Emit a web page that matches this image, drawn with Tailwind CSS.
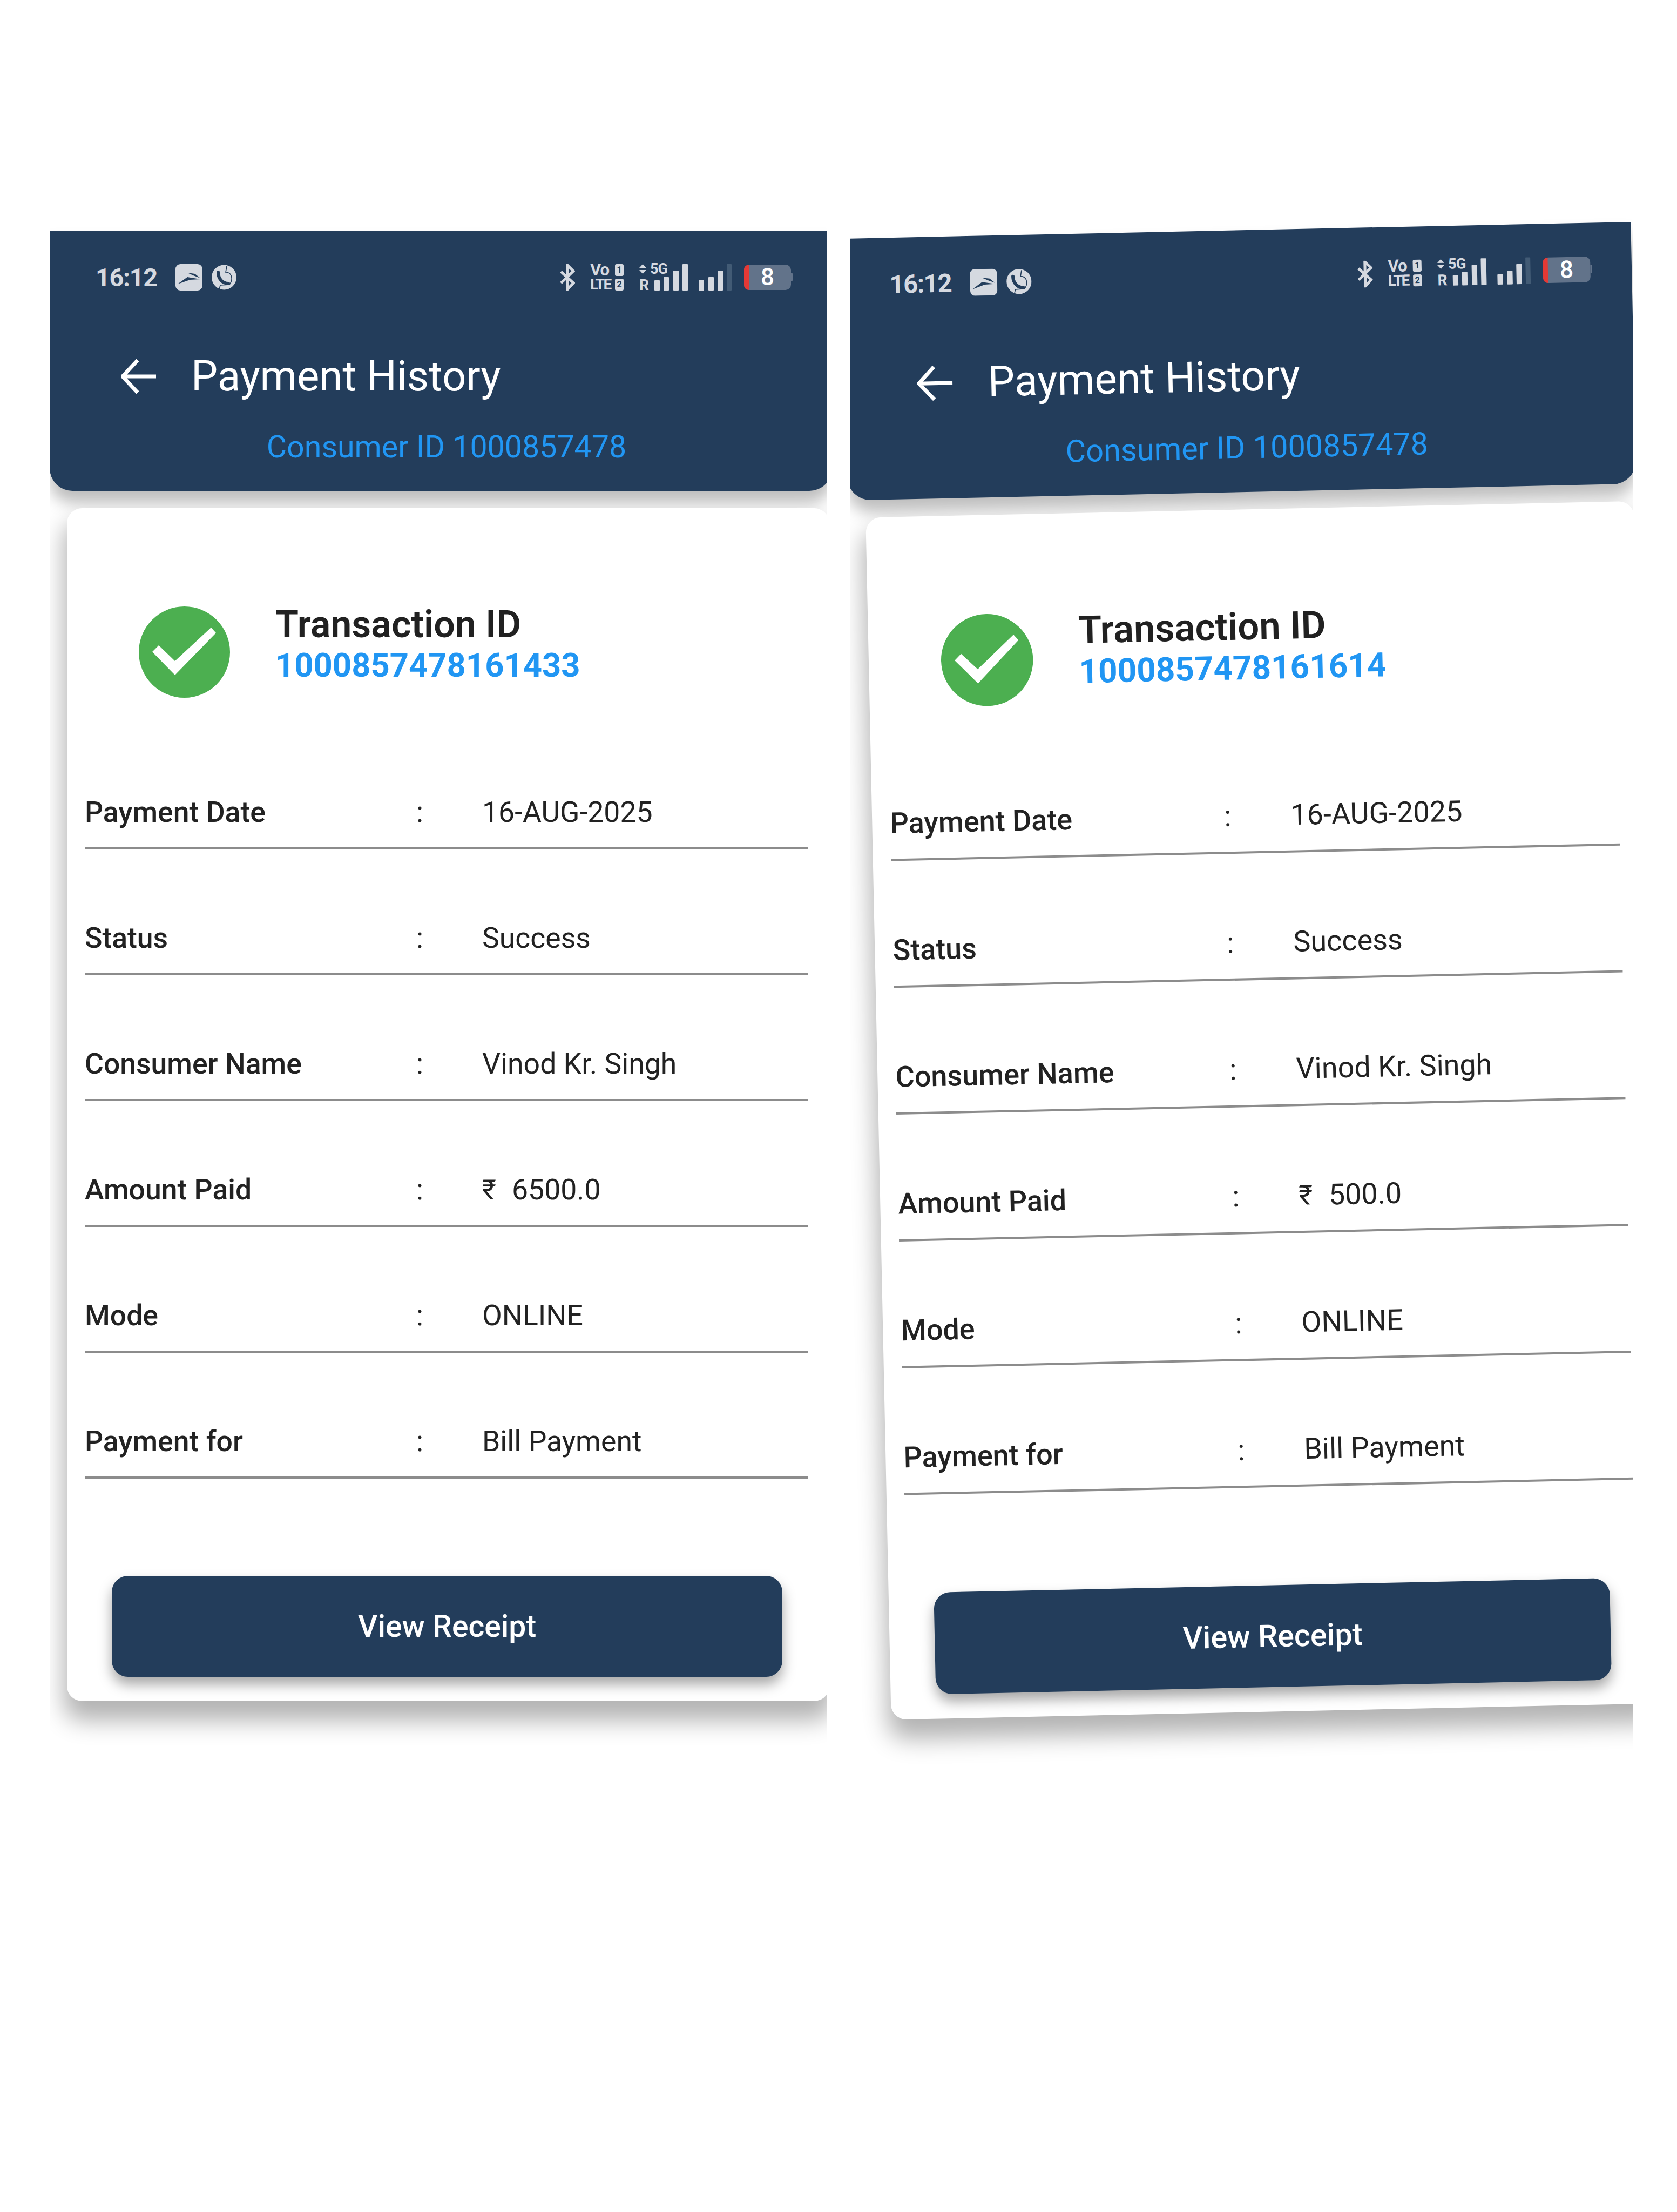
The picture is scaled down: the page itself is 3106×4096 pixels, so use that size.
<!DOCTYPE html>
<html>
<head>
<meta charset="utf-8">
<title>Payment History</title>
<script src="https://cdn.jsdelivr.net/npm/@tailwindcss/browser@4"></script>
</head>
<body class="bg-white [font-family:Roboto,'Noto_Sans',sans-serif]">
<div class="flex w-[3106px] h-[4096px] pt-[380px] pl-[92px]">

  <!-- left screenshot -->
  <div class="w-[1439px] h-[2900px] overflow-hidden shrink-0 pt-[48px]">
    <div class="w-[1449px]">
      <!-- header -->
      <div class="h-[481px] pt-[60px] bg-[#233d5b] rounded-b-[42px] shadow-[0_22px_28px_rgba(0,0,0,0.26)]">
        <div class="flex h-[50px] items-center pl-[85px] pr-[73px]">
          <span class="w-[115px] text-[47px] leading-none font-bold text-[#d5d9e0] tracking-[-1.5px]">16:12</span>
          <svg class="ml-[33px]" width="50" height="49" viewBox="0 0 50 49"><rect width="50" height="49" rx="9" fill="#d5d9e0"/><path d="M4 37 L22 24 L46 28 L27 29 Z M22 16 L36 18 L46 26 L33 21 Z" fill="#233d5b"/></svg>
          <svg class="ml-[17px]" width="46" height="47" viewBox="0 0 46 47"><circle cx="23" cy="23.5" r="23" fill="#d5d9e0"/><path d="M12 14 C12 26 20 35 31 35" fill="none" stroke="#233d5b" stroke-width="6" stroke-linecap="round"/><path d="M28 3 L26 14 C38 14 40 28 33 37 L16 38 L14 46" fill="none" stroke="#233d5b" stroke-width="1.6"/></svg>
          <svg class="ml-auto" width="28" height="49" viewBox="0 0 28 49"><path d="M2 14 L25 35 L14 47 L14 2 L25 13 L2 35" fill="none" stroke="#d5d9e0" stroke-width="5"/></svg>
          <div class="ml-[28px] w-[62px] h-[49px] flex flex-col justify-between font-bold text-[#d5d9e0] leading-[22px]">
            <div class="flex justify-between items-center"><span class="text-[31px] tracking-[-1px]">Vo</span><span class="w-[16px] h-[22px] rounded-[3px] bg-[#d5d9e0] text-[#233d5b] text-[16px] text-center">1</span></div>
            <div class="flex justify-between items-center"><span class="text-[28px] tracking-[-2.5px]">LTE</span><span class="w-[16px] h-[22px] rounded-[3px] bg-[#d5d9e0] text-[#233d5b] text-[16px] text-center">2</span></div>
          </div>
          <div class="ml-[29px] flex items-end h-[49px] text-[#d5d9e0]">
            <div class="w-[20px] h-[49px] flex flex-col justify-between">
              <svg width="13" height="18" viewBox="0 0 13 18"><path d="M6.5 0 L13 7 H0 Z M0 11 H13 L6.5 18 Z" fill="#d5d9e0"/></svg>
              <span class="text-[28px] font-bold leading-[20px]">R</span>
            </div>
            <div class="w-[35px] h-[49px] flex flex-col justify-between">
              <span class="text-[27px] font-bold leading-[19px] tracking-[-1px]">5G</span>
              <div class="flex items-end gap-[7px] pl-[8px]"><span class="w-[10px] h-[19px] bg-[#d5d9e0] rounded-[1px]"></span><span class="w-[10px] h-[25px] bg-[#d5d9e0] rounded-[1px]"></span></div>
            </div>
            <span class="ml-[8px] w-[10px] h-[37px] bg-[#d5d9e0] rounded-[1px]"></span>
            <span class="ml-[7px] w-[10px] h-[49px] bg-[#d5d9e0] rounded-[1px]"></span>
            <span class="ml-[20px] w-[10px] h-[19px] bg-[#d5d9e0] rounded-[1px]"></span>
            <span class="ml-[8px] w-[10px] h-[25px] bg-[#d5d9e0] rounded-[1px]"></span>
            <span class="ml-[7px] w-[10px] h-[37px] bg-[#d5d9e0] rounded-[1px]"></span>
            <span class="ml-[7px] w-[9px] h-[49px] bg-[#425b75] rounded-[1px]"></span>
          </div>
          <div class="ml-[23px] flex items-center">
            <div class="w-[87px] h-[47px] rounded-[10px] bg-[#62738a] flex">
              <span class="w-[9px] bg-[#e53935] rounded-l-[10px]"></span>
              <span class="flex-1 text-center text-white text-[44px] font-medium leading-[47px] pr-[9px]">8</span>
            </div>
            <span class="w-[3px] h-[16px] bg-[#62738a] rounded-r-[2px]"></span>
          </div>
        </div>
        <div class="flex items-center h-[90px] mt-[114px] pl-[132px]">
          <svg width="65" height="64" viewBox="0 0 65 64"><path d="M65 32 H4 M31 2 L3 32 L31 62" fill="none" stroke="white" stroke-width="7"/></svg>
          <span class="ml-[65px] text-[78px] text-white leading-none">Payment History</span>
        </div>
        <p class="mt-[56px] pl-[21px] text-center text-[57.3px] leading-[60px] text-[#2196f3]">Consumer ID 1000857478</p>
      </div>

      <!-- card -->
      <div class="ml-[32px] mt-[32px] w-[1412px] h-[2209px] bg-white rounded-[28px] pt-[182px] shadow-[0_30px_44px_6px_rgba(0,0,0,0.3)]">
        <div class="flex items-start pl-[133px]">
          <svg width="169" height="169" viewBox="0 0 169 169"><circle cx="84.5" cy="84.5" r="84.5" fill="#4caf50"/><path d="M25 84 L67 127 L143 49 L134 39 L67 101 L37 72 Z" fill="white"/></svg>
          <div class="ml-[84px] -mt-[5px]">
            <p class="text-[70px] leading-[76px] font-semibold text-[#212121]">Transaction ID</p>
            <p class="mt-[8px] text-[61.5px] leading-[60px] font-bold text-[#2196f3]">1000857478161433</p>
          </div>
        </div>
        <div class="mt-[48px] ml-[33px] w-[1340px] text-[#222]">
          <div class="flex items-end h-[233px] pb-[35px] border-b-4 border-[#8c8c8c] text-[53.5px] leading-[60px]"><span class="w-[614px] font-medium">Payment Date</span><span class="w-[122px]">:</span><span>16-AUG-2025</span></div>
          <div class="flex items-end h-[233px] pb-[35px] border-b-4 border-[#8c8c8c] text-[53.5px] leading-[60px]"><span class="w-[614px] font-medium">Status</span><span class="w-[122px]">:</span><span>Success</span></div>
          <div class="flex items-end h-[233px] pb-[35px] border-b-4 border-[#8c8c8c] text-[53.5px] leading-[60px]"><span class="w-[614px] font-medium">Consumer Name</span><span class="w-[122px]">:</span><span>Vinod Kr. Singh</span></div>
          <div class="flex items-end h-[233px] pb-[35px] border-b-4 border-[#8c8c8c] text-[53.5px] leading-[60px]"><span class="w-[614px] font-medium">Amount Paid</span><span class="w-[122px]">:</span><span class="w-[55px] text-[50px]">₹</span><span>6500.0</span></div>
          <div class="flex items-end h-[233px] pb-[35px] border-b-4 border-[#8c8c8c] text-[53.5px] leading-[60px]"><span class="w-[614px] font-medium">Mode</span><span class="w-[122px]">:</span><span>ONLINE</span></div>
          <div class="flex items-end h-[233px] pb-[35px] border-b-4 border-[#8c8c8c] text-[53.5px] leading-[60px]"><span class="w-[614px] font-medium">Payment for</span><span class="w-[122px]">:</span><span>Bill Payment</span></div>
        </div>
        <div class="ml-[83px] mt-[180px] w-[1242px] h-[187px] rounded-[30px] bg-[#233d5b] flex items-center justify-center text-white text-[57px] font-medium shadow-[0_14px_24px_rgba(0,0,0,0.35)]">View Receipt</div>
      </div>
    </div>
  </div>

  <!-- right screenshot, same screen photographed slightly turned -->
  <div class="ml-[44px] w-[1450px] h-[2980px] overflow-hidden shrink-0">
    <div class="w-[1449px] -ml-[15px] mt-[62px] origin-top-left rotate-[-1.22deg] scale-[1.008]">
      <!-- header -->
      <div class="h-[481px] pt-[60px] bg-[#233d5b] rounded-b-[42px] shadow-[0_22px_28px_rgba(0,0,0,0.26)]">
        <div class="flex h-[50px] items-center pl-[85px] pr-[73px]">
          <span class="w-[115px] text-[47px] leading-none font-bold text-[#d5d9e0] tracking-[-1.5px]">16:12</span>
          <svg class="ml-[33px]" width="50" height="49" viewBox="0 0 50 49"><rect width="50" height="49" rx="9" fill="#d5d9e0"/><path d="M4 37 L22 24 L46 28 L27 29 Z M22 16 L36 18 L46 26 L33 21 Z" fill="#233d5b"/></svg>
          <svg class="ml-[17px]" width="46" height="47" viewBox="0 0 46 47"><circle cx="23" cy="23.5" r="23" fill="#d5d9e0"/><path d="M12 14 C12 26 20 35 31 35" fill="none" stroke="#233d5b" stroke-width="6" stroke-linecap="round"/><path d="M28 3 L26 14 C38 14 40 28 33 37 L16 38 L14 46" fill="none" stroke="#233d5b" stroke-width="1.6"/></svg>
          <svg class="ml-auto" width="28" height="49" viewBox="0 0 28 49"><path d="M2 14 L25 35 L14 47 L14 2 L25 13 L2 35" fill="none" stroke="#d5d9e0" stroke-width="5"/></svg>
          <div class="ml-[28px] w-[62px] h-[49px] flex flex-col justify-between font-bold text-[#d5d9e0] leading-[22px]">
            <div class="flex justify-between items-center"><span class="text-[31px] tracking-[-1px]">Vo</span><span class="w-[16px] h-[22px] rounded-[3px] bg-[#d5d9e0] text-[#233d5b] text-[16px] text-center">1</span></div>
            <div class="flex justify-between items-center"><span class="text-[28px] tracking-[-2.5px]">LTE</span><span class="w-[16px] h-[22px] rounded-[3px] bg-[#d5d9e0] text-[#233d5b] text-[16px] text-center">2</span></div>
          </div>
          <div class="ml-[29px] flex items-end h-[49px] text-[#d5d9e0]">
            <div class="w-[20px] h-[49px] flex flex-col justify-between">
              <svg width="13" height="18" viewBox="0 0 13 18"><path d="M6.5 0 L13 7 H0 Z M0 11 H13 L6.5 18 Z" fill="#d5d9e0"/></svg>
              <span class="text-[28px] font-bold leading-[20px]">R</span>
            </div>
            <div class="w-[35px] h-[49px] flex flex-col justify-between">
              <span class="text-[27px] font-bold leading-[19px] tracking-[-1px]">5G</span>
              <div class="flex items-end gap-[7px] pl-[8px]"><span class="w-[10px] h-[19px] bg-[#d5d9e0] rounded-[1px]"></span><span class="w-[10px] h-[25px] bg-[#d5d9e0] rounded-[1px]"></span></div>
            </div>
            <span class="ml-[8px] w-[10px] h-[37px] bg-[#d5d9e0] rounded-[1px]"></span>
            <span class="ml-[7px] w-[10px] h-[49px] bg-[#d5d9e0] rounded-[1px]"></span>
            <span class="ml-[20px] w-[10px] h-[19px] bg-[#d5d9e0] rounded-[1px]"></span>
            <span class="ml-[8px] w-[10px] h-[25px] bg-[#d5d9e0] rounded-[1px]"></span>
            <span class="ml-[7px] w-[10px] h-[37px] bg-[#d5d9e0] rounded-[1px]"></span>
            <span class="ml-[7px] w-[9px] h-[49px] bg-[#425b75] rounded-[1px]"></span>
          </div>
          <div class="ml-[23px] flex items-center">
            <div class="w-[87px] h-[47px] rounded-[10px] bg-[#62738a] flex">
              <span class="w-[9px] bg-[#e53935] rounded-l-[10px]"></span>
              <span class="flex-1 text-center text-white text-[44px] font-medium leading-[47px] pr-[9px]">8</span>
            </div>
            <span class="w-[3px] h-[16px] bg-[#62738a] rounded-r-[2px]"></span>
          </div>
        </div>
        <div class="flex items-center h-[90px] mt-[114px] pl-[132px]">
          <svg width="65" height="64" viewBox="0 0 65 64"><path d="M65 32 H4 M31 2 L3 32 L31 62" fill="none" stroke="white" stroke-width="7"/></svg>
          <span class="ml-[65px] text-[78px] text-white leading-none">Payment History</span>
        </div>
        <p class="mt-[56px] pl-[21px] text-center text-[57.3px] leading-[60px] text-[#2196f3]">Consumer ID 1000857478</p>
      </div>

      <!-- card -->
      <div class="ml-[32px] mt-[32px] w-[1412px] h-[2209px] bg-white rounded-[28px] pt-[182px] shadow-[0_30px_44px_6px_rgba(0,0,0,0.3)]">
        <div class="flex items-start pl-[133px]">
          <svg width="169" height="169" viewBox="0 0 169 169"><circle cx="84.5" cy="84.5" r="84.5" fill="#4caf50"/><path d="M25 84 L67 127 L143 49 L134 39 L67 101 L37 72 Z" fill="white"/></svg>
          <div class="ml-[84px] -mt-[5px]">
            <p class="text-[70px] leading-[76px] font-semibold text-[#212121]">Transaction ID</p>
            <p class="mt-[8px] text-[61.5px] leading-[60px] font-bold text-[#2196f3]">1000857478161614</p>
          </div>
        </div>
        <div class="mt-[48px] ml-[33px] w-[1340px] text-[#222]">
          <div class="flex items-end h-[233px] pb-[35px] border-b-4 border-[#8c8c8c] text-[53.5px] leading-[60px]"><span class="w-[614px] font-medium">Payment Date</span><span class="w-[122px]">:</span><span>16-AUG-2025</span></div>
          <div class="flex items-end h-[233px] pb-[35px] border-b-4 border-[#8c8c8c] text-[53.5px] leading-[60px]"><span class="w-[614px] font-medium">Status</span><span class="w-[122px]">:</span><span>Success</span></div>
          <div class="flex items-end h-[233px] pb-[35px] border-b-4 border-[#8c8c8c] text-[53.5px] leading-[60px]"><span class="w-[614px] font-medium">Consumer Name</span><span class="w-[122px]">:</span><span>Vinod Kr. Singh</span></div>
          <div class="flex items-end h-[233px] pb-[35px] border-b-4 border-[#8c8c8c] text-[53.5px] leading-[60px]"><span class="w-[614px] font-medium">Amount Paid</span><span class="w-[122px]">:</span><span class="w-[55px] text-[50px]">₹</span><span>500.0</span></div>
          <div class="flex items-end h-[233px] pb-[35px] border-b-4 border-[#8c8c8c] text-[53.5px] leading-[60px]"><span class="w-[614px] font-medium">Mode</span><span class="w-[122px]">:</span><span>ONLINE</span></div>
          <div class="flex items-end h-[233px] pb-[35px] border-b-4 border-[#8c8c8c] text-[53.5px] leading-[60px]"><span class="w-[614px] font-medium">Payment for</span><span class="w-[122px]">:</span><span>Bill Payment</span></div>
        </div>
        <div class="ml-[83px] mt-[180px] w-[1242px] h-[187px] rounded-[30px] bg-[#233d5b] flex items-center justify-center text-white text-[57px] font-medium shadow-[0_14px_24px_rgba(0,0,0,0.35)]">View Receipt</div>
      </div>
    </div>
  </div>

</div>
</body>
</html>
